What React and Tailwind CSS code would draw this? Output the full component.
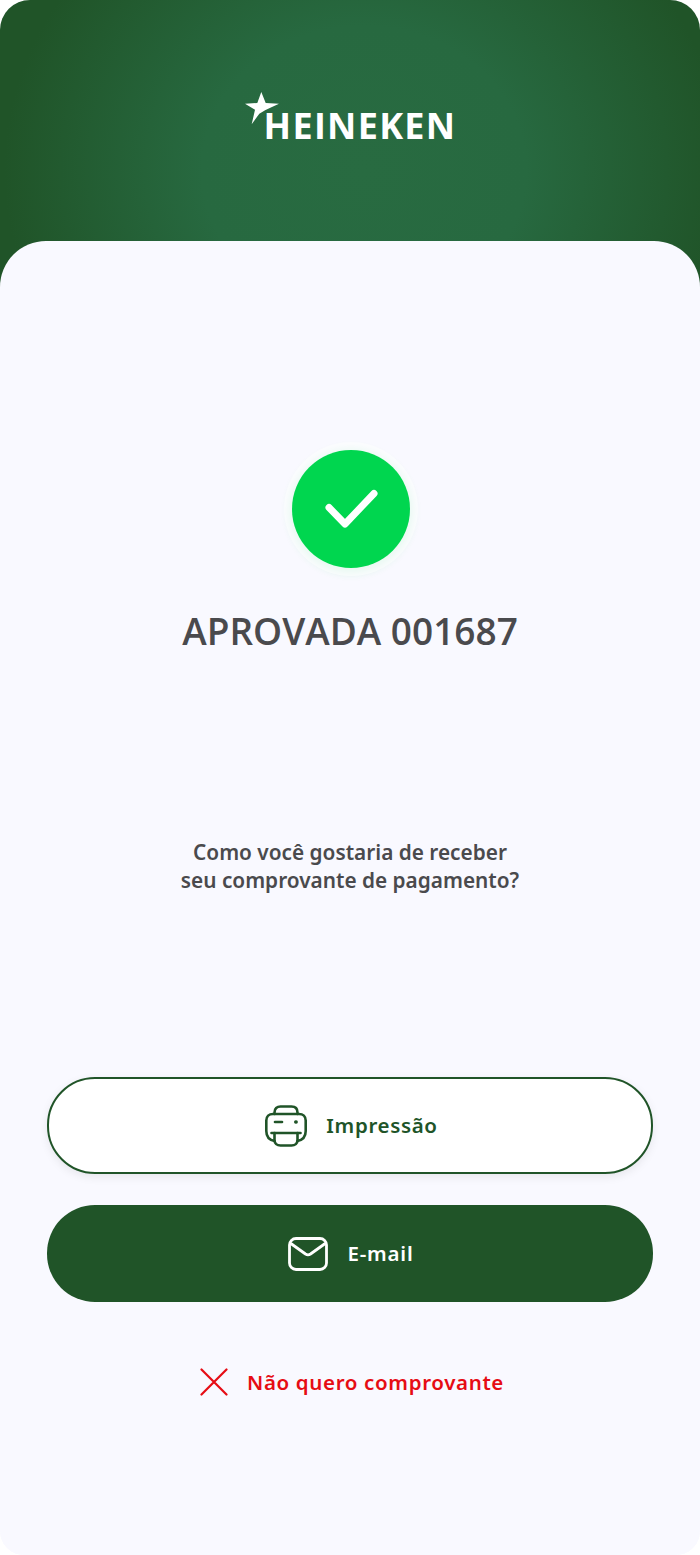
import { useState } from "react";

function Star() {
  return (
    <svg width="36" height="36" viewBox="0 0 36 36" className="absolute left-[-19px] top-[-16px]" fill="#fff">
      <path d="M0 11.7 L12.3 11 L16.3 0 L20.7 11 L34 11.7 L20.5 18 L14.3 21.7 L6.7 32.3 L10 17.7 Z" />
    </svg>
  );
}

function PrinterIcon() {
  return (
    <svg width="44" height="44" viewBox="0 0 44 44" fill="none" stroke="#205428" strokeWidth="2.6" strokeLinecap="round" strokeLinejoin="round">
      <path d="M10.5 10 V8.5 C10.5 4.5 13 2.5 16.5 2.5 H27.5 C31 2.5 33.5 4.5 33.5 8.5 V10" />
      <path d="M10.5 37 C5.5 36 2.3 32.5 2.3 27 V16.5 C2.3 12.5 5 10 9 10 H35 C39 10 41.7 12.5 41.7 16.5 V27 C41.7 32.5 38.5 36 33.5 37" />
      <path d="M7.5 29 H36.5" />
      <path d="M10.5 29 V36 C10.5 39.5 13 41.5 16.5 41.5 H27.5 C31 41.5 33.5 39.5 33.5 36 V29" />
      <path d="M11 18 H18" />
      <path d="M31.7 18 H32.2" strokeWidth="3.4" />
    </svg>
  );
}

function MailIcon() {
  return (
    <svg width="40" height="34" viewBox="0 0 40 34" fill="none" stroke="#fff" strokeWidth="2.8" strokeLinecap="round" strokeLinejoin="round">
      <rect x="1.5" y="1.5" width="37" height="31" rx="6.5" />
      <path d="M3.5 7 L17.5 17 C19 18 21 18 22.5 17 L36.5 7" />
    </svg>
  );
}

export default function App() {
  const [choice, setChoice] = useState(null);

  return (
    <div className="h-[1555px] w-[700px] bg-white font-['Noto_Sans',sans-serif]">
      <div className="flex h-full flex-col overflow-hidden rounded-t-[30px] rounded-b-[24px] bg-[#f9f9ff]">
        {/* Header */}
        <div className="flex h-[300px] shrink-0 justify-center bg-[radial-gradient(ellipse_360px_320px_at_52%_170px,#286b41_0%,#276940_45%,#205428_100%)] pt-[108px]">
          <div className="relative ml-[20px] h-[36px] text-[36px] leading-[36px] font-bold tracking-[1.3px] text-white font-['Open_Sans',sans-serif]">
            <Star />
            HEINEKEN
          </div>
        </div>

        {/* Card */}
        <div className="-mt-[59px] flex flex-1 flex-col items-center rounded-t-[46px] bg-[#f9f9ff]">
          <div className="mt-[209px] ml-[2px] flex h-[118px] w-[118px] items-center justify-center rounded-full bg-[#00d64f] shadow-[0_0_0_8px_rgba(255,255,255,0.5),0_2px_9px_3px_rgba(2,214,80,0.16)]">
            <svg width="54" height="40" viewBox="0 0 54 40" fill="none" stroke="#fff" strokeWidth="7" strokeLinecap="round" strokeLinejoin="round">
              <path d="M5 18.5 L21 35 L50 4.5" />
            </svg>
          </div>

          <h1 className="mt-[41px] text-[37px] leading-[44px] font-semibold text-[#4a4a4d] font-['Open_Sans',sans-serif]">
            APROVADA 001687
          </h1>

          <p className="mt-[185px] text-center text-[20.8px] leading-[28px] font-semibold text-[#4a4a4d]">
            Como você gostaria de receber
            <br />
            seu comprovante de pagamento?
          </p>

          <div className="mt-[183px] flex w-[606px] flex-col gap-[31px]">
            <button
              onClick={() => setChoice("print")}
              className="flex h-[97px] items-center justify-center gap-[18px] rounded-[48px] border-2 border-[#205428] bg-white pl-[2px] text-[20.5px] font-semibold tracking-[0.65px] text-[#205428] shadow-[0_3px_10px_rgba(0,0,0,0.08)]"
            >
              <PrinterIcon />
              Impressão
            </button>
            <button
              onClick={() => setChoice("email")}
              className="flex h-[97px] items-center justify-center gap-[19px] rounded-[48px] bg-[#205428] pl-[2px] text-[20.5px] font-semibold tracking-[0.8px] text-white"
            >
              <MailIcon />
              E-mail
            </button>
          </div>

          <button
            onClick={() => setChoice("none")}
            className="mt-[65px] ml-[4px] flex items-center gap-[19px] text-[20.5px] leading-[30px] font-semibold tracking-[0.65px] text-[#e60c14]"
          >
            <svg width="28" height="28" viewBox="0 0 28 28" fill="none" stroke="#e60c14" strokeWidth="2.2" strokeLinecap="round">
              <path d="M1.5 1.5 L26.5 26.5 M26.5 1.5 L1.5 26.5" />
            </svg>
            Não quero comprovante
          </button>
        </div>
      </div>
    </div>
  );
}
